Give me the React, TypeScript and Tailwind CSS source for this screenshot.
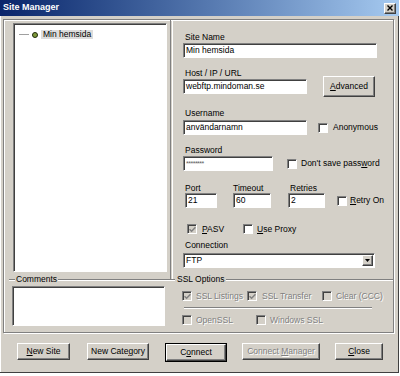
import type { ReactNode } from "react";

const sunken =
  "border border-t-[#808080] border-l-[#808080] border-b-white border-r-white shadow-[inset_1px_1px_0_#404040]";
const raised =
  "bg-[#d4d0c8] border border-t-white border-l-white border-b-[#404040] border-r-[#404040] shadow-[inset_-1px_-1px_0_#808080]";
const grayText = "text-[#808080] [text-shadow:1px_1px_0_#fff]";

function Edit({ className = "", children }: { className?: string; children?: ReactNode }) {
  return (
    <div className={`flex h-[15px] items-center bg-white pl-[2px] leading-none ${sunken} ${className}`}>
      {children}
    </div>
  );
}

function Check({ on = false, off = false }: { on?: boolean; off?: boolean }) {
  return (
    <span
      className={`flex h-[10px] w-[10px] shrink-0 items-center justify-center ${sunken} ${
        off ? "bg-[#d4d0c8]" : "bg-white"
      }`}
    >
      {on && (
        <svg width="7" height="7" viewBox="0 0 7 7">
          <path d="M0.5 3.2 L2.6 5.3 L6.5 1.2" fill="none" stroke={off ? "#808080" : "#000"} strokeWidth="1.5" />
        </svg>
      )}
    </span>
  );
}

function Btn({ children, className = "", off = false }: { children: ReactNode; className?: string; off?: boolean }) {
  return (
    <div className={`flex h-[17px] items-center justify-center ${raised} ${off ? grayText : ""} ${className}`}>
      {children}
    </div>
  );
}

function App() {
  return (
    <div className="h-[376px] w-[400px] bg-white font-['Liberation_Sans',Arial,sans-serif] text-[8.5px] text-black">
      <div className="flex h-[373px] w-[399px] flex-col bg-[#d4d0c8] shadow-[inset_-1px_-1px_0_#404040,inset_1px_1px_0_#fff]">
        {/* title bar */}
        <div className="flex h-[16px] items-center justify-between bg-linear-to-r from-[#0a246a] to-[#a6caf0] pl-[3px] pr-[3px]">
          <span className="text-[9px] font-bold text-white">Site Manager</span>
          <div className={`flex h-[11px] w-[12px] items-center justify-center ${raised}`}>
            <svg width="6" height="6" viewBox="0 0 6 6">
              <path d="M0.5 0.5 L5.5 5.5 M5.5 0.5 L0.5 5.5" stroke="#000" strokeWidth="1.4" />
            </svg>
          </div>
        </div>

        {/* main frame */}
        <div className="ml-[3px] mt-[3px] flex h-[314px] w-[391px] flex-col border border-[#808080] shadow-[1px_1px_0_#fff,inset_1px_1px_0_#fff]">
          <div className="flex h-[259px]">
            {/* tree */}
            <div className="w-[166px]">
              <div className={`ml-[9px] mt-[3px] h-[249px] w-[154px] bg-white ${sunken}`}>
                <div className="mt-[6px] flex h-[9px] items-center">
                  <span className="ml-[5px] h-0 w-[10px] border-t border-[#a0a0a0]" />
                  <span className="ml-[3px] h-[6px] w-[6px] rounded-full border-[1.5px] border-[#1f2a0a] bg-[#7f9a3a]" />
                  <span className="ml-[3px] bg-[#dcdcdc] px-[2px] leading-[9px]">Min hemsida</span>
                </div>
              </div>
            </div>
            <div className="w-[2px] border-l border-[#808080] shadow-[1px_0_0_#fff]" />

            {/* fields */}
            <div className="flex flex-1 flex-col pl-[11px]">
              <div className="mt-[12px] h-[10px] pl-[2px] leading-[10px]">Site Name</div>
              <Edit className="mt-[1px] w-[194px]">Min hemsida</Edit>

              <div className="mt-[10px] h-[10px] pl-[2px] leading-[10px]">Host / IP / URL</div>
              <div className="-mt-[2px] flex items-start">
                <Edit className="mt-[3px] w-[124px]">webftp.mindoman.se</Edit>
                <Btn className="ml-[16px] h-[21px] w-[52px]">
                  <span>
                    <u>A</u>dvanced
                  </span>
                </Btn>
              </div>

              <div className="mt-[11px] h-[10px] pl-[2px] leading-[10px]">Username</div>
              <div className="mt-[2px] flex items-center">
                <Edit className="w-[124px]">användarnamn</Edit>
                <span className="ml-[11px]">
                  <Check />
                </span>
                <span className="ml-[5px]">Anonymous</span>
              </div>

              <div className="mt-[10px] h-[10px] pl-[2px] leading-[10px]">Password</div>
              <div className="mt-[1px] flex items-center">
                <Edit className="w-[90px] text-[7px] tracking-[-0.5px] text-[#606060]">********</Edit>
                <span className="ml-[14px]">
                  <Check />
                </span>
                <span className="ml-[4px]">
                  Don't save pass<u>w</u>ord
                </span>
              </div>

              <div className="mt-[12px] flex items-end">
                <div className="ml-[2px] flex w-[32px] flex-col">
                  <div className="h-[10px] leading-[10px]">Port</div>
                  <Edit>21</Edit>
                </div>
                <div className="ml-[16px] flex w-[38px] flex-col">
                  <div className="h-[10px] leading-[10px]">Timeout</div>
                  <Edit>60</Edit>
                </div>
                <div className="ml-[17px] flex w-[37px] flex-col">
                  <div className="h-[10px] pl-[2px] leading-[10px]">Retries</div>
                  <Edit>2</Edit>
                </div>
                <div className="ml-[12px] flex h-[15px] items-center">
                  <Check />
                  <span className="ml-[3px]">
                    <u>R</u>etry On
                  </span>
                </div>
              </div>

              <div className="ml-[4px] mt-[16px] flex h-[10px] items-center">
                <div className="flex w-[56px] items-center">
                  <Check on off />
                  <span className="ml-[5px]">
                    <u>P</u>ASV
                  </span>
                </div>
                <Check />
                <span className="ml-[4px]">
                  <u>U</u>se Proxy
                </span>
              </div>

              <div className="mt-[6px] h-[10px] pl-[2px] leading-[10px]">Connection</div>
              <div className={`mt-[3px] flex h-[15px] w-[192px] items-center justify-between bg-white pl-[2px] ${sunken}`}>
                <span>FTP</span>
                <div className={`mr-[1px] flex h-[11px] w-[11px] items-center justify-center ${raised}`}>
                  <svg width="5" height="3" viewBox="0 0 5 3">
                    <path d="M0 0 L5 0 L2.5 3 Z" fill="#000" />
                  </svg>
                </div>
              </div>
            </div>
          </div>

          {/* group boxes */}
          <div className="flex flex-1">
            <div className="ml-[5px] w-[161px] border-t border-[#808080] shadow-[inset_0_1px_0_#fff]">
              <div className="-mt-[6px] ml-[6px] h-[10px] w-fit bg-[#d4d0c8] px-[1px] leading-[10px]">Comments</div>
              <div className={`ml-[3px] mt-[2px] h-[40px] w-[153px] bg-white ${sunken}`} />
            </div>
            <div className="flex-1 border-t border-[#808080] shadow-[inset_0_1px_0_#fff]">
              <div className="-mt-[6px] ml-[5px] h-[10px] w-fit bg-[#d4d0c8] px-[2px] leading-[10px]">SSL Options</div>
              <div className={`ml-[12px] mt-[6px] flex h-[12px] items-center ${grayText}`}>
                <div className="flex w-[65px] items-center">
                  <Check on off />
                  <span className="ml-[4px]">SSL Listings</span>
                </div>
                <div className="flex w-[75px] items-center">
                  <Check on off />
                  <span className="ml-[5px]">SSL Transfer</span>
                </div>
                <Check off />
                <span className="ml-[4px]">Clear (CCC)</span>
              </div>
              <div className="ml-[14px] mt-[5px] h-[2px] w-[188px] border-t border-[#808080] shadow-[inset_0_1px_0_#fff]" />
              <div className={`ml-[12px] mt-[5px] flex h-[12px] items-center ${grayText}`}>
                <div className="flex w-[74px] items-center">
                  <Check off />
                  <span className="ml-[4px]">OpenSSL</span>
                </div>
                <Check off />
                <span className="ml-[4px]">Windows SSL</span>
              </div>
            </div>
          </div>
        </div>

        {/* buttons */}
        <div className="mt-[10px] flex pl-[17px]">
          <Btn className="w-[53px]">
            <span>
              <u>N</u>ew Site
            </span>
          </Btn>
          <Btn className="ml-[17px] w-[62px]">
            <span>
              New Cate<u>g</u>ory
            </span>
          </Btn>
          <div className="ml-[16px] w-[62px] border border-black">
            <Btn className="h-[15px] w-full">
              <span>
                C<u>o</u>nnect
              </span>
            </Btn>
          </div>
          <Btn className="ml-[15px] w-[78px]" off>
            <span>
              Connect <u>M</u>anager
            </span>
          </Btn>
          <Btn className="ml-[15px] w-[48px]">
            <span>
              <u>C</u>lose
            </span>
          </Btn>
        </div>
      </div>
    </div>
  );
}

export default App;
